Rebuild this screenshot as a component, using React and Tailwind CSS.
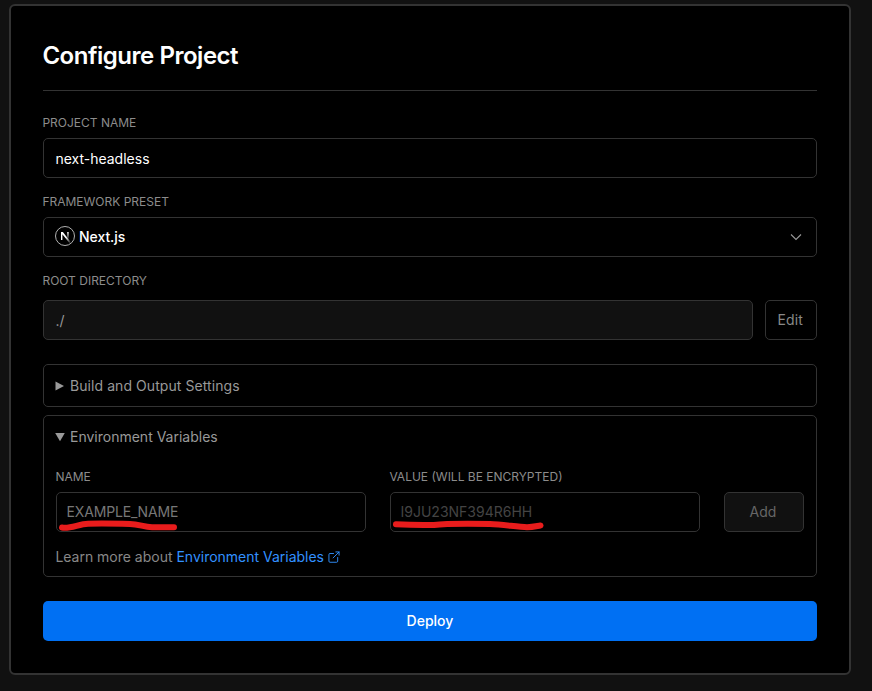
function Label({ children }) {
  return (
    <div className="-ml-[0.6px] h-4 whitespace-nowrap text-[12px] leading-4 text-[#8c8c8c]">{children}</div>
  );
}

function NextLogo() {
  return (
    <svg width="20" height="20" viewBox="0 0 20 20" fill="none" className="mb-0.5 block">
      <defs>
        <linearGradient id="diag" x1="11" y1="11" x2="15" y2="17" gradientUnits="userSpaceOnUse">
          <stop stopColor="#fff" />
          <stop offset="1" stopColor="#fff" stopOpacity="0.1" />
        </linearGradient>
        <linearGradient id="stem" x1="13" y1="6" x2="13" y2="14" gradientUnits="userSpaceOnUse">
          <stop stopColor="#fff" />
          <stop offset="1" stopColor="#fff" stopOpacity="0" />
        </linearGradient>
      </defs>
      <circle cx="10" cy="10" r="9.5" fill="#000" stroke="#c4c4c4" strokeWidth="0.9" />
      <path d="M6 6h1.900l8.100 10.500-1.300 1L7.400 8.200V14H6z" fill="url(#diag)" />
      <path d="M12.200 6h1.500v8h-1.500z" fill="url(#stem)" />
    </svg>
  );
}

export default function App() {
  return (
    <div className="h-[691px] w-[872px] overflow-hidden bg-[#111111] pl-[9px] pt-1 font-['Inter',sans-serif] text-[14px] leading-5 text-[#999999]">
      <main className="h-[671px] w-[842px] rounded-md border-2 border-[#333333] bg-black px-8 pt-[34px]">
        <h1 className="-ml-[0.6px] h-8 text-[24px] font-semibold leading-8 tracking-[-0.47px] text-white">
          Configure Project
        </h1>
        <div className="mt-[18px] h-px bg-[#333333]" />

        <div className="mt-6">
          <Label>PROJECT NAME</Label>
          <div className="mt-[7px] flex h-10 items-center rounded-[5px] border border-[#333333] px-[11.400px] pt-[2px] text-white">
            next-headless
          </div>
        </div>

        <div className="mt-4">
          <Label>FRAMEWORK PRESET</Label>
          <div className="mt-[7px] flex h-10 items-center rounded-[5px] border border-[#333333] pl-[11px] pr-[14px] text-white">
            <NextLogo />
            <span className="ml-1 flex-1 font-medium tracking-[-0.05px]">Next.js</span>
            <svg width="12" height="8" viewBox="0 0 12 8" fill="none" stroke="#999" strokeWidth="1.1">
              <path d="M1 1.5l5 5 5-5" />
            </svg>
          </div>
        </div>

        <div className="mt-4">
          <Label>ROOT DIRECTORY</Label>
          <div className="mt-[11px] flex gap-3">
            <div className="flex h-10 flex-1 items-center rounded-[5px] border border-[#333333] bg-[#111111] px-[11.400px] pt-[2px]">
              ./
            </div>
            <button className="h-10 w-[52px] rounded-[5px] border border-[#333333] pr-[1.500px] text-[#888888] tracking-[0.1px]">Edit</button>
          </div>
        </div>

        <section className="mt-6 flex h-[43px] items-center rounded-[5px] border border-[#333333] px-[11px]">
          <svg width="10" height="10" viewBox="0 0 10 10" fill="#999" className="mr-[5px]">
            <path d="M.5.5L9 5 .5 9.500z" />
          </svg>
          <span className="pt-px tracking-[0.070px]">Build and Output Settings</span>
        </section>

        <section className="mt-2 h-[162px] rounded-[5px] border border-[#333333] px-3 pt-[11px]">
          <div className="-ml-px flex h-5 items-center">
            <svg width="10" height="10" viewBox="0 0 10 10" fill="#999" className="mr-[5px]">
              <path d="M.2 1h9.600L5 9.200z" />
            </svg>
            <span>Environment Variables</span>
          </div>
          <div className="mt-[22px] flex items-end gap-6">
            <div className="flex-1">
              <Label>NAME</Label>
              <div className="relative mt-[7px] flex h-10 items-center rounded-[5px] border border-[#333333] px-[9.500px] tracking-[-0.160px] text-[#777777]">
                EXAMPLE_NAME
                <svg className="absolute left-0 top-[26px]" width="124" height="14" viewBox="0 0 124 14" fill="none" stroke="#e81c1c" strokeWidth="6" strokeLinecap="round" strokeLinejoin="round">
                  <path d="M5 8.500C13 10 22 5 31 4.700C44 4.300 60 4.600 73 5C82 5.300 87 8 95 8.200H117" />
                </svg>
              </div>
            </div>
            <div className="flex-1">
              <Label>VALUE (WILL BE ENCRYPTED)</Label>
              <div className="relative mt-[7px] flex h-10 items-center rounded-[5px] border border-[#333333] px-[9.500px] text-[#444444]">
                I9JU23NF394R6HH
                <svg className="absolute left-0 top-[26px]" width="156" height="14" viewBox="0 0 156 14" fill="none" stroke="#e81c1c" strokeWidth="6" strokeLinecap="round" strokeLinejoin="round">
                  <path d="M5 5.300C17 6 30 6.300 43 6C55 4.500 75 4.600 99 5C112 5.500 127 8 136 8.200C142 8.200 146 7 149.500 6.500" />
                </svg>
              </div>
            </div>
            <button className="h-10 w-20 rounded-[5px] border border-[#333333] bg-[#111111] pr-[2px] text-[#666666]">Add</button>
          </div>
          <div className="-ml-[0.6px] mt-[15px] flex items-center whitespace-nowrap tracking-[-0.010px] text-[#888888]">
            Learn more about&nbsp;<a className="text-[#3291ff]">Environment Variables</a>
            <svg width="12" height="12" viewBox="0 0 13 13" fill="none" stroke="#3291ff" strokeLinecap="round" strokeLinejoin="round" className="ml-1">
              <path d="M10.500 7v4a1.200 1.200 0 0 1-1.200 1.200H2.200A1.200 1.200 0 0 1 1 11V3.900a1.200 1.200 0 0 1 1.200-1.200H6M8.500 1H12v3.500M5.500 7.500L12 1" />
            </svg>
          </div>
        </section>

        <button className="mt-6 h-10 w-full rounded-[5px] bg-[#0070f3] font-medium text-white">Deploy</button>
      </main>
    </div>
  );
}
